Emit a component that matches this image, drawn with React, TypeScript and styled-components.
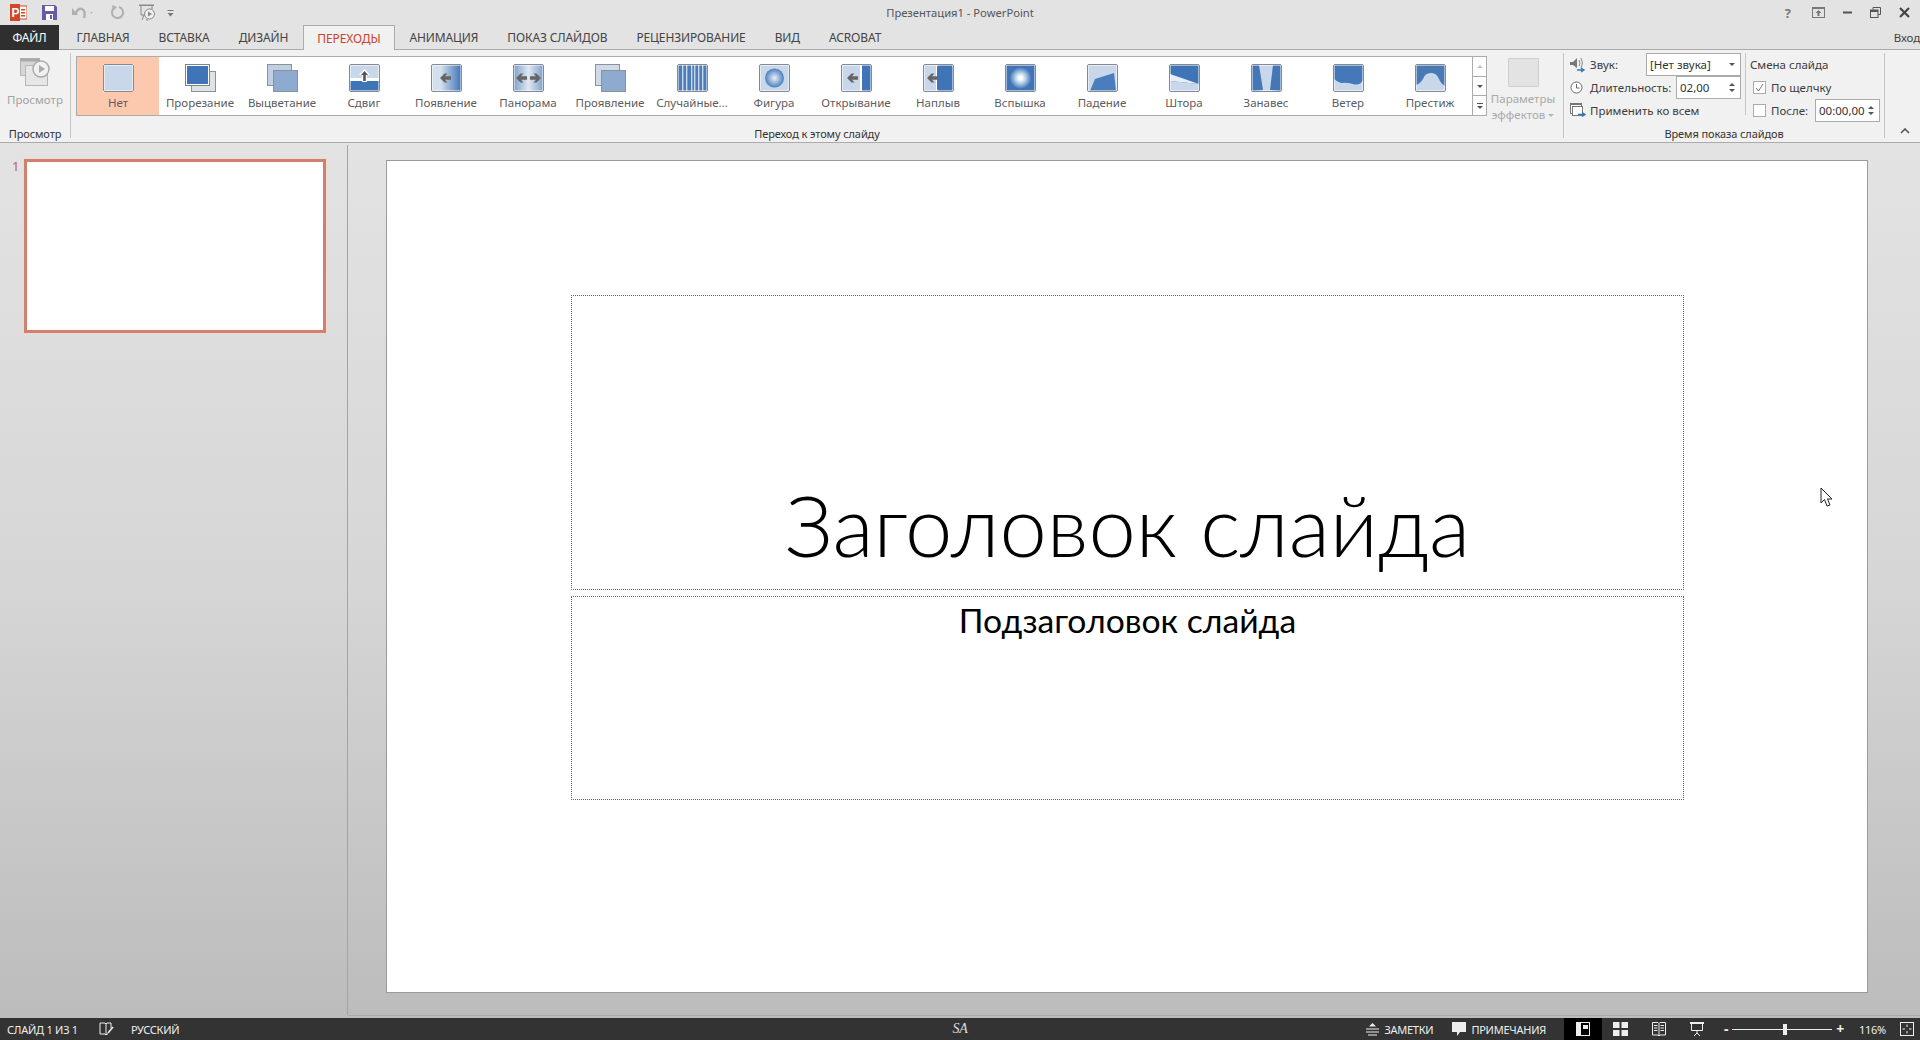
import React from "react";
import styled, { createGlobalStyle } from "styled-components";

const GlobalStyle = createGlobalStyle`
  html, body {
    margin: 0;
    padding: 0;
    background: #e3e3e3;
  }
  * {
    box-sizing: border-box;
  }
`;

const Window = styled.div`
  width: 1920px;
  height: 1040px;
  overflow: hidden;
  display: grid;
  grid-template-rows: 25px 25px 93px 875px 22px;
  font-family: "Noto Sans", "Liberation Sans", sans-serif;
  font-size: 12px;
  color: #444;
`;

/* title bar */
const TitleBar = styled.div`
  display: grid;
  grid-template-columns: 1fr auto 1fr;
  align-items: center;
  background: #e3e3e3;
`;

const QuickAccess = styled.div`
  display: flex;
  align-items: center;
  padding-left: 10px;
  gap: 14px;
`;

const DocTitle = styled.div`
  font-size: 11.2px;
  color: #555;
`;

const WindowButtons = styled.div`
  display: flex;
  justify-content: flex-end;
  align-items: center;
  gap: 18px;
  padding-right: 10px;
`;

const Help = styled.span`
  font-weight: 700;
  font-size: 13px;
  color: #777;
  margin-right: 3px;
`;

/* tabs */
const TabRow = styled.div`
  display: flex;
  align-items: stretch;
  background: #e3e3e3;
  border-bottom: 1px solid #ababab;
  letter-spacing: -0.12px;
`;

const FileTab = styled.div`
  width: 59px;
  background: #2f2f2f;
  color: #fff;
  display: flex;
  align-items: center;
  justify-content: center;
  font-size: 12px;
  margin-bottom: -1px;
  margin-right: 3px;
`;

const Tab = styled.div<{ $active?: boolean }>`
  padding: 0 13.5px;
  display: flex;
  align-items: center;
  font-size: 12px;
  white-space: nowrap;
  color: ${(p) => (p.$active ? "#c8452b" : "#444")};
  background: ${(p) => (p.$active ? "#f1f1f1" : "transparent")};
  border: 1px solid ${(p) => (p.$active ? "#ababab" : "transparent")};
  border-bottom: 0;
  margin-bottom: ${(p) => (p.$active ? "-1px" : "0")};
`;

const SignIn = styled.div`
  margin-left: auto;
  display: flex;
  align-items: center;
  font-size: 11.5px;
  color: #444;
`;

/* ribbon */
const Ribbon = styled.div`
  display: flex;
  background: #f1f1f1;
  border-bottom: 1px solid #ababab;
  padding-top: 3px;
`;

const Group = styled.div<{ $width: number }>`
  width: ${(p) => p.$width}px;
  height: 85px;
  border-right: 1px solid #c6c6c6;
  display: flex;
  flex-direction: column;
`;

const GroupBody = styled.div`
  height: 74px;
  display: flex;
`;

const GroupLabel = styled.div`
  height: 11px;
  line-height: 14px;
  font-size: 11px;
  letter-spacing: -0.1px;
  color: #333;
  text-align: center;
  white-space: nowrap;
`;

const PreviewButton = styled.div`
  width: 100%;
  display: flex;
  flex-direction: column;
  align-items: center;
  padding-top: 4px;
  color: #a2a2a2;
  font-size: 11.5px;
  gap: 5px;
`;

const TransitionsBody = styled(GroupBody)`
  padding: 3px 0 0 5px;
`;

const Gallery = styled.div`
  height: 60px;
  width: 1411px;
  display: flex;
  background: #fff;
  border: 1px solid #ababab;
`;

const GalleryItems = styled.div`
  flex: 1;
  display: flex;
`;

const GalleryItem = styled.div<{ $selected?: boolean }>`
  width: 82px;
  display: flex;
  flex-direction: column;
  align-items: center;
  padding-top: 7px;
  background: ${(p) => (p.$selected ? "#fcc9ae" : "transparent")};
  color: #5c5c5c;
  font-size: 11.5px;
  white-space: nowrap;
`;

const ItemLabel = styled.span`
  line-height: 16px;
  margin-top: 3px;
`;

const GalleryScroll = styled.div`
  width: 14px;
  display: flex;
  flex-direction: column;
  border-left: 1px solid #ababab;
`;

const ScrollButton = styled.div`
  flex: 1;
  display: flex;
  flex-direction: column;
  gap: 2px;
  align-items: center;
  justify-content: center;
  & + & {
    border-top: 1px solid #ababab;
  }
`;

const Triangle = styled.span<{ $dir?: "up" | "down"; $color?: string }>`
  width: 0;
  height: 0;
  border-left: 3px solid transparent;
  border-right: 3px solid transparent;
  ${(p) =>
    p.$dir === "up"
      ? `border-bottom: 3px solid ${p.$color || "#555"};`
      : `border-top: 3px solid ${p.$color || "#555"};`}
`;

const ScrollLine = styled.span`
  width: 6px;
  height: 1px;
  background: #555;
`;

const EffectButton = styled.div`
  width: 72px;
  display: flex;
  flex-direction: column;
  align-items: center;
  padding-top: 2px;
  color: #a9a9a9;
  font-size: 11.5px;
  line-height: 16px;
  text-align: center;
`;

const EffectBox = styled.div`
  width: 31px;
  height: 29px;
  background: #e3e3e3;
  border: 1px solid #cfcfcf;
  border-radius: 1px;
  margin-bottom: 4px;
`;

const EffectLine = styled.span`
  display: flex;
  align-items: center;
  gap: 3px;
`;

const TimingBody = styled(GroupBody)`
  padding-left: 6px;
`;

const TimingColumn = styled.div`
  width: 171px;
  display: flex;
  flex-direction: column;
`;

const TimingSide = styled.div`
  margin-left: 4px;
  padding-left: 4px;
  border-left: 1px solid #c6c6c6;
  height: 62px;
  width: 135px;
  display: flex;
  flex-direction: column;
`;

const TimingRow = styled.div`
  height: 23px;
  flex-shrink: 0;
  display: flex;
  align-items: center;
  color: #3c3c3c;
  font-size: 11.5px;
  white-space: nowrap;
`;

const RowIcon = styled.span`
  width: 20px;
  display: flex;
  align-items: center;
`;

const Field = styled.div<{ $width: number }>`
  margin-left: auto;
  width: ${(p) => p.$width}px;
  height: 23px;
  background: #fff;
  border: 1px solid #ababab;
  display: flex;
  align-items: center;
  justify-content: space-between;
  padding: 0 5px 0 3px;
  font-size: 11.5px;
  color: #333;
`;

const Spin = styled.span`
  display: flex;
  flex-direction: column;
  gap: 3px;
`;

const CheckBox = styled.span`
  width: 13px;
  height: 13px;
  background: #fff;
  border: 1px solid #ababab;
  margin: 0 5px 0 3px;
  display: flex;
  align-items: center;
  justify-content: center;
`;

const CollapseCell = styled.div`
  flex: 1;
  display: flex;
  align-items: flex-end;
  justify-content: flex-end;
  padding: 0 10px 4px 0;
  height: 85px;
`;

/* work area */
const Workspace = styled.div`
  display: flex;
  background: linear-gradient(#e3e3e3, #d6d6d6 50%, #bcbcbc);
`;

const ThumbPane = styled.div`
  width: 348px;
  margin-top: 2px;
  border-right: 1px solid #a3a3a3;
  display: flex;
  align-items: flex-start;
  padding: 14px 0 0 12px;
  margin-bottom: 3px;
`;

const ThumbNumber = styled.span`
  font-size: 13px;
  color: #c4604a;
  width: 12px;
  line-height: 14px;
`;

const Thumb = styled.div`
  width: 302px;
  height: 174px;
  background: #fff;
  border: 3px solid #d0806f;
  box-shadow: 0 0 0 1px #f3d8cf;
`;

const EditPane = styled.div`
  flex: 1;
  padding: 17px 0 0 38px;
`;

const EditFrame = styled.div`
  height: 857px;
`;

const Slide = styled.div`
  position: relative;
  width: 1482px;
  height: 833px;
  background: #fff;
  border: 1px solid #9a9a9a;
  padding: 134px 0 0 184px;
  display: flex;
  flex-direction: column;
  gap: 6px;
`;

const Placeholder = styled.div<{ $height: number }>`
  width: 1113px;
  height: ${(p) => p.$height}px;
  border: 1px dotted #666;
  display: flex;
  justify-content: center;
  color: #000;
`;

const TitlePlaceholder = styled(Placeholder)`
  align-items: flex-end;
`;

const TitleText = styled.div`
  font-family: "Lato", "Open Sans", sans-serif;
  font-weight: 300;
  font-size: 85px;
  line-height: 100px;
  padding-bottom: 15px;
  white-space: nowrap;
`;

const SubtitleText = styled.div`
  font-family: "Lato", "Open Sans", sans-serif;
  font-size: 33.7px;
  line-height: 40px;
  padding-top: 3px;
  white-space: nowrap;
`;

const Pointer = styled.svg`
  position: absolute;
  left: 1433px;
  top: 326px;
`;

const BottomRule = styled.div`
  height: 1px;
  margin-left: -38px;
  margin-top: 22px;
  background: #a9a9a9;
`;

/* status bar */
const StatusBar = styled.div`
  display: grid;
  grid-template-columns: 1fr auto 1fr;
  align-items: center;
  background: #333;
  color: #eee;
  font-size: 11px;
  letter-spacing: -0.25px;
`;

const StatusLeft = styled.div`
  display: flex;
  align-items: center;
  padding-left: 7px;
  white-space: nowrap;
`;

const StatusRight = styled.div`
  display: flex;
  align-items: center;
  justify-content: flex-end;
  height: 22px;
  white-space: nowrap;
`;

const StatusItem = styled.div<{ $gap?: number }>`
  display: flex;
  align-items: center;
  gap: 5px;
  margin-left: ${(p) => p.$gap || 0}px;
`;

const Signature = styled.span`
  font-family: "Liberation Serif", serif;
  font-style: italic;
  font-size: 14px;
  color: #ddd;
`;

const ViewButton = styled.div<{ $active?: boolean; $gap?: number; $width?: number }>`
  width: ${(p) => p.$width || 38}px;
  height: 22px;
  margin-left: ${(p) => p.$gap || 0}px;
  display: flex;
  align-items: center;
  justify-content: center;
  background: ${(p) => (p.$active ? "#000" : "transparent")};
`;

const ZoomTrack = styled.div`
  width: 100px;
  height: 1px;
  background: #eee;
  margin: 0 4px;
  position: relative;
`;

const ZoomThumb = styled.span`
  position: absolute;
  left: 51px;
  top: -5px;
  width: 4px;
  height: 11px;
  background: #eee;
`;

const ZoomSign = styled.span`
  font-size: 14px;
  font-weight: 700;
  line-height: 14px;
  color: #eee;
`;

const Frame = () => (
  <rect x="0.5" y="0.5" width="30" height="27" rx="1.5" fill="none" stroke="#fff" strokeWidth="2" />
);

const Border = () => (
  <rect x="0.5" y="0.5" width="30" height="27" rx="1.5" fill="none" stroke="#858a90" />
);

const Arrow = ({ x, y, flip }: { x: number; y: number; flip?: boolean }) => (
  <path
    transform={`translate(${x} ${y})${flip ? " scale(-1 1)" : ""}`}
    d="M0 0 L4.5 -4.5 H7.5 L5 -1.8 H11 V1.8 H5 L7.5 4.5 H4.5 Z"
    fill="#666"
  />
);

const blue = "#3f74b6";
const light = "#c8d8ea";

const TransitionIcon = ({ kind }: { kind: string }) => {
  let art: React.ReactNode = null;
  switch (kind) {
    case "none":
      art = <rect x="1" y="1" width="29" height="26" fill={light} />;
      break;
    case "cut":
      return (
        <svg width="31" height="28" viewBox="0 0 31 28">
          <rect x="6.5" y="7.5" width="24" height="20" fill="#dfe3e8" stroke="#8d9196" />
          <rect x="0.5" y="0.5" width="24" height="21" fill={blue} stroke="#fff" />
          <rect x="0.5" y="0.5" width="24" height="21" fill="none" stroke="#7d8389" />
          <rect x="1.5" y="1.5" width="22" height="19" fill="none" stroke="#fff" />
        </svg>
      );
    case "fade":
    case "reveal":
      return (
        <svg width="31" height="28" viewBox="0 0 31 28">
          <rect x="0.5" y="0.5" width="24" height="21" fill={kind === "fade" ? "#c0cfe2" : "#cfdbe9"} stroke="#8d9196" />
          <rect x="6.5" y="6.5" width="24" height="21" fill="#8faacf" stroke="#8d9196" />
        </svg>
      );
    case "push":
      art = (
        <>
          <rect x="1" y="1" width="29" height="13" fill={light} />
          <rect x="1" y="14" width="29" height="3" fill="#fff" />
          <rect x="1" y="17" width="29" height="10" fill={blue} />
          <path d="M15.5 5 L21 11 H17.8 V18 H13.2 V11 H10 Z" fill="#fff" />
          <path d="M15.5 7 L19 11 H16.8 V17 H14.2 V11 H12 Z" fill="#555" />
        </>
      );
      break;
    case "appear":
      art = (
        <>
          <defs>
            <linearGradient id="g-appear" x1="0" x2="1" y1="0" y2="0">
              <stop offset="0.3" stopColor="#d4e0ee" />
              <stop offset="1" stopColor="#3f74b6" />
            </linearGradient>
          </defs>
          <rect x="1" y="1" width="29" height="26" fill="url(#g-appear)" />
          <Arrow x={9} y={14} />
        </>
      );
      break;
    case "pan":
      art = (
        <>
          <defs>
            <linearGradient id="g-pan" x1="0" x2="1" y1="0" y2="0">
              <stop offset="0" stopColor="#7fa2cc" />
              <stop offset="0.5" stopColor="#dfe8f2" />
              <stop offset="1" stopColor="#7fa2cc" />
            </linearGradient>
          </defs>
          <rect x="1" y="1" width="29" height="26" fill="url(#g-pan)" />
          <Arrow x={3} y={14} />
          <Arrow x={28} y={14} flip />
        </>
      );
      break;
    case "bars":
      art = (
        <>
          <rect x="1" y="1" width="29" height="26" fill="#4c7db9" />
          {[5, 9, 14, 17, 21, 25].map((x) => (
            <rect key={x} x={x} y="1" width="1.4" height="26" fill="#c6d7ea" />
          ))}
        </>
      );
      break;
    case "shape":
      art = (
        <>
          <defs>
            <radialGradient id="g-shape">
              <stop offset="0" stopColor="#eaf1f8" />
              <stop offset="1" stopColor="#4b7fbc" />
            </radialGradient>
          </defs>
          <rect x="1" y="1" width="29" height="26" fill={light} />
          <circle cx="15.5" cy="14" r="9.5" fill="url(#g-shape)" />
        </>
      );
      break;
    case "open":
      art = (
        <>
          <rect x="1" y="1" width="18" height="26" fill={light} />
          <rect x="19" y="1" width="2" height="26" fill="#fff" />
          <rect x="21" y="1" width="9" height="26" fill={blue} />
          <Arrow x={6} y={14} />
        </>
      );
      break;
    case "overlap":
      art = (
        <>
          <rect x="1" y="1" width="12" height="26" fill={light} />
          <rect x="13" y="1" width="16" height="26" rx="2" fill="#fff" />
          <rect x="14" y="1" width="16" height="26" rx="2" fill={blue} />
          <Arrow x={4} y={14} />
        </>
      );
      break;
    case "flash":
      art = (
        <>
          <defs>
            <radialGradient id="g-flash">
              <stop offset="0.15" stopColor="#fff" />
              <stop offset="0.45" stopColor="#bcd5ee" />
              <stop offset="1" stopColor="#3f74b6" />
            </radialGradient>
          </defs>
          <rect x="1" y="1" width="29" height="26" fill="#3f74b6" />
          <circle cx="15.5" cy="14" r="11" fill="url(#g-flash)" />
        </>
      );
      break;
    case "fall":
      art = (
        <>
          <rect x="1" y="1" width="29" height="26" fill={light} />
          <path d="M3 27 L8 15 L27 9 L29 27 Z" fill="#4a7dbb" />
        </>
      );
      break;
    case "blind":
      art = (
        <>
          <rect x="1" y="1" width="29" height="26" fill={blue} />
          <path d="M1 10 L30 20 L1 17 Z" fill="#e6edf5" />
          <path d="M1 17 L30 20 V27 H1 Z" fill={light} />
        </>
      );
      break;
    case "drape":
      art = (
        <>
          <rect x="1" y="1" width="29" height="26" fill={light} />
          <path d="M1 1 H8 L12 26 L4 27 H1 Z" fill="#4577b6" />
          <path d="M22 1 H30 V27 H27 L19 26 Z" fill="#4577b6" />
        </>
      );
      break;
    case "wind":
      art = (
        <>
          <rect x="1" y="1" width="29" height="26" fill={light} />
          <path d="M1 1 H30 V16 Q27 22 20 20 T8 19 Q3 17 1 15 Z" fill="#4478b8" />
        </>
      );
      break;
    case "prestige":
      art = (
        <>
          <rect x="1" y="1" width="29" height="26" fill={light} />
          <path d="M1 1 H30 V22 Q26 20 24 15 Q21 8 15.5 9 Q10 9 8 15 Q5 20 1 21 Z" fill="#4a7ab6" />
        </>
      );
      break;
  }
  return (
    <svg width="31" height="28" viewBox="0 0 31 28">
      {art}
      <Frame />
      <Border />
    </svg>
  );
};

const transitions: [string, string][] = [
  ["none", "Нет"],
  ["cut", "Прорезание"],
  ["fade", "Выцветание"],
  ["push", "Сдвиг"],
  ["appear", "Появление"],
  ["pan", "Панорама"],
  ["reveal", "Проявление"],
  ["bars", "Случайные..."],
  ["shape", "Фигура"],
  ["open", "Открывание"],
  ["overlap", "Наплыв"],
  ["flash", "Вспышка"],
  ["fall", "Падение"],
  ["blind", "Штора"],
  ["drape", "Занавес"],
  ["wind", "Ветер"],
  ["prestige", "Престиж"],
];

const QuickIcons = () => (
  <>
    <svg width="17" height="17" viewBox="0 0 17 17">
      <rect x="6" y="2" width="11" height="13" fill="#fff" stroke="#d24726" />
      <rect x="11" y="5" width="4" height="1.5" fill="#d24726" />
      <rect x="11" y="8" width="4" height="1.5" fill="#d24726" />
      <rect x="11" y="11" width="4" height="1.5" fill="#d24726" />
      <rect x="0" y="0" width="10" height="17" fill="#d24726" />
      <text x="1.5" y="13" fontSize="12" fontWeight="700" fill="#fff" fontFamily="Liberation Sans">P</text>
    </svg>
    <svg width="15" height="15" viewBox="0 0 15 15" style={{ marginLeft: 1 }}>
      <path d="M0 0 H13 L15 2 V15 H0 Z" fill="#6a5aa6" />
      <rect x="3" y="1" width="9" height="5" fill="#fff" />
      <rect x="4" y="9" width="7" height="6" fill="#fff" />
      <rect x="8" y="10" width="2" height="4" fill="#6a5aa6" />
    </svg>
    <svg width="22" height="15" viewBox="0 0 22 15">
      <path d="M5 8 Q7 3 11 4 Q15 6 13 13" fill="none" stroke="#b0b0b0" strokeWidth="2.4" />
      <path d="M1 3 L7 10 L1 10 Z" fill="#b0b0b0" />
      <path d="M19 7 h3 l-1.5 2 z" fill="#b9b9b9" />
    </svg>
    <svg width="15" height="15" viewBox="0 0 15 15" style={{ marginLeft: 3 }}>
      <path d="M9 2 A5.6 5.6 0 1 1 3.5 3.5" fill="none" stroke="#b0b0b0" strokeWidth="2" />
      <path d="M2 0 L7 2 L3 6 Z" fill="#b0b0b0" />
    </svg>
    <svg width="17" height="17" viewBox="0 0 17 17">
      <rect x="0" y="0.5" width="15" height="1.5" fill="#8a8a8a" />
      <path d="M2 2 V11 H7 M13 2 V5" fill="none" stroke="#8a8a8a" />
      <circle cx="10.5" cy="10" r="5" fill="#eee" stroke="#8a8a8a" />
      <path d="M9 7.5 L13 10 L9 12.5 Z" fill="#8a8a8a" />
      <path d="M5 11 L3 16 M8 15 V17" stroke="#8a8a8a" />
    </svg>
    <svg width="7" height="8" viewBox="0 0 7 8" style={{ marginLeft: -3 }}>
      <rect x="0.5" y="1" width="6" height="1" fill="#777" />
      <path d="M0.5 4 h6 l-3 3.4 z" fill="#777" />
    </svg>
  </>
);

const WindowIcons = () => (
  <>
    <Help>?</Help>
    <svg width="13" height="11" viewBox="0 0 13 11">
      <rect x="0.5" y="0.5" width="12" height="10" fill="none" stroke="#777" />
      <rect x="0" y="0" width="13" height="2" fill="#777" />
      <path d="M6.5 3 L9.5 6 H7.5 V9 H5.5 V6 H3.5 Z" fill="#777" />
    </svg>
    <svg width="9" height="3" viewBox="0 0 9 3">
      <rect width="9" height="2" y="0.5" fill="#555" />
    </svg>
    <svg width="11" height="11" viewBox="0 0 11 11">
      <path d="M3 2.5 V0.5 H10.5 V7.5 H8" fill="none" stroke="#555" />
      <rect x="0.5" y="3" width="7.5" height="7.5" fill="#e3e3e3" stroke="#555" />
      <rect x="0" y="3" width="8" height="2" fill="#555" />
    </svg>
    <svg width="11" height="11" viewBox="0 0 11 11">
      <path d="M1 1 L10 10 M10 1 L1 10" stroke="#444" strokeWidth="2.2" />
    </svg>
  </>
);

export default function App() {
  return (
    <Window>
      <GlobalStyle />
      <TitleBar>
        <QuickAccess>
          <QuickIcons />
        </QuickAccess>
        <DocTitle>Презентация1 - PowerPoint</DocTitle>
        <WindowButtons>
          <WindowIcons />
        </WindowButtons>
      </TitleBar>

      <TabRow>
        <FileTab>ФАЙЛ</FileTab>
        <Tab>ГЛАВНАЯ</Tab>
        <Tab>ВСТАВКА</Tab>
        <Tab>ДИЗАЙН</Tab>
        <Tab $active>ПЕРЕХОДЫ</Tab>
        <Tab>АНИМАЦИЯ</Tab>
        <Tab>ПОКАЗ СЛАЙДОВ</Tab>
        <Tab>РЕЦЕНЗИРОВАНИЕ</Tab>
        <Tab>ВИД</Tab>
        <Tab>ACROBAT</Tab>
        <SignIn>Вход</SignIn>
      </TabRow>

      <Ribbon>
        <Group $width={71}>
          <GroupBody>
            <PreviewButton>
              <svg width="32" height="30" viewBox="0 0 32 30">
                <rect x="1.5" y="1.5" width="19" height="17" fill="#d6d6d6" stroke="#b5b5b5" />
                <rect x="1.5" y="1.5" width="19" height="3" fill="#a9a9a9" />
                <rect x="6.5" y="8.5" width="22" height="20" fill="#e6e6e6" stroke="#b5b5b5" />
                <circle cx="22" cy="12" r="8" fill="#f1f1f1" stroke="#aaa" strokeWidth="1.5" />
                <path d="M20 8 L26 12 L20 16 Z" fill="#aaa" />
              </svg>
              Просмотр
            </PreviewButton>
          </GroupBody>
          <GroupLabel>Просмотр</GroupLabel>
        </Group>

        <Group $width={1493}>
          <TransitionsBody>
            <Gallery>
              <GalleryItems>
                {transitions.map(([kind, label]) => (
                  <GalleryItem key={kind} $selected={kind === "none"}>
                    <TransitionIcon kind={kind} />
                    <ItemLabel>{label}</ItemLabel>
                  </GalleryItem>
                ))}
              </GalleryItems>
              <GalleryScroll>
                <ScrollButton>
                  <Triangle $dir="up" $color="#c4c4c4" />
                </ScrollButton>
                <ScrollButton>
                  <Triangle />
                </ScrollButton>
                <ScrollButton>
                  <ScrollLine />
                  <Triangle />
                </ScrollButton>
              </GalleryScroll>
            </Gallery>
            <EffectButton>
              <EffectBox />
              Параметры
              <EffectLine>
                эффектов
                <Triangle $color="#b5b5b5" />
              </EffectLine>
            </EffectButton>
          </TransitionsBody>
          <GroupLabel>Переход к этому слайду</GroupLabel>
        </Group>

        <Group $width={321}>
          <TimingBody>
            <TimingColumn>
              <TimingRow>
                <RowIcon>
                  <svg width="16" height="16" viewBox="0 0 16 16">
                    <path d="M0 5 H3 L7 1 V11 L3 8 H0 Z" fill="#777" />
                    <path d="M9 3 Q11 6 9 9 M11 1 Q14 6 11 11" fill="none" stroke="#888" />
                    <path d="M7 13 H13 M11 11 L14 13 L11 15" fill="none" stroke="#3f74b6" strokeWidth="1.4" />
                  </svg>
                </RowIcon>
                Звук:
                <Field $width={95}>
                  [Нет звука]
                  <Triangle />
                </Field>
              </TimingRow>
              <TimingRow>
                <RowIcon>
                  <svg width="13" height="13" viewBox="0 0 13 13">
                    <circle cx="6.5" cy="6.5" r="5.5" fill="#fff" stroke="#666" />
                    <path d="M6.5 3 V7 H9.5" fill="none" stroke="#666" />
                  </svg>
                </RowIcon>
                Длительность:
                <Field $width={65}>
                  02,00
                  <Spin>
                    <Triangle $dir="up" />
                    <Triangle />
                  </Spin>
                </Field>
              </TimingRow>
              <TimingRow>
                <RowIcon>
                  <svg width="16" height="15" viewBox="0 0 16 15">
                    <rect x="0.5" y="0.5" width="11" height="10" fill="#fff" stroke="#777" />
                    <rect x="0" y="0" width="12" height="2" fill="#777" />
                    <rect x="2.5" y="3.5" width="10" height="9" fill="#fff" stroke="#777" />
                    <path d="M8 11.5 H14 M12 9.5 L15 11.5 L12 13.5" fill="none" stroke="#3f74b6" strokeWidth="1.4" />
                  </svg>
                </RowIcon>
                Применить ко всем
              </TimingRow>
            </TimingColumn>
            <TimingSide>
              <TimingRow>Смена слайда</TimingRow>
              <TimingRow>
                <CheckBox>
                  <svg width="9" height="9" viewBox="0 0 9 9">
                    <path d="M1 5 L3.5 8 L8 1" fill="none" stroke="#777" />
                  </svg>
                </CheckBox>
                По щелчку
              </TimingRow>
              <TimingRow>
                <CheckBox />
                После:
                <Field $width={65}>
                  00:00,00
                  <Spin>
                    <Triangle $dir="up" />
                    <Triangle />
                  </Spin>
                </Field>
              </TimingRow>
            </TimingSide>
          </TimingBody>
          <GroupLabel>Время показа слайдов</GroupLabel>
        </Group>

        <CollapseCell>
          <svg width="10" height="6" viewBox="0 0 10 6">
            <path d="M1 5 L5 1 L9 5" fill="none" stroke="#555" strokeWidth="1.6" />
          </svg>
        </CollapseCell>
      </Ribbon>

      <Workspace>
        <ThumbPane>
          <ThumbNumber>1</ThumbNumber>
          <Thumb />
        </ThumbPane>
        <EditPane>
          <EditFrame>
            <Slide>
              <TitlePlaceholder $height={295}>
                <TitleText>Заголовок слайда</TitleText>
              </TitlePlaceholder>
              <Placeholder $height={204}>
                <SubtitleText>Подзаголовок слайда</SubtitleText>
              </Placeholder>
              <Pointer width="14" height="21" viewBox="0 0 14 21">
                <path d="M1 1 V16 L4.5 12.5 L7 19 L10 18 L7.5 12 H12 Z" fill="#fff" stroke="#222" />
              </Pointer>
            </Slide>
            <BottomRule />
          </EditFrame>
        </EditPane>
      </Workspace>

      <StatusBar>
        <StatusLeft>
          <span>СЛАЙД 1 ИЗ 1</span>
          <StatusItem $gap={21}>
            <svg width="15" height="15" viewBox="0 0 15 15">
              <path d="M1 1 H6 L7 2 V13 L6 12 H1 Z M7 2 L8 1 H12 V6 M7 13 L8 12 H9" fill="none" stroke="#eee" />
              <path d="M9 11 L14 5" stroke="#eee" strokeWidth="1.6" />
            </svg>
          </StatusItem>
          <StatusItem $gap={17}>РУССКИЙ</StatusItem>
        </StatusLeft>
        <Signature>SA</Signature>
        <StatusRight>
          <StatusItem>
            <svg width="13" height="13" viewBox="0 0 13 13">
              <path d="M6.5 0 L10 3.5 H3 Z" fill="#eee" />
              <path d="M0 6 H13 M0 9 H13 M2 12 H11" stroke="#eee" />
            </svg>
            ЗАМЕТКИ
          </StatusItem>
          <StatusItem $gap={19}>
            <svg width="14" height="14" viewBox="0 0 14 14">
              <path d="M0 0 H14 V10 H8 L5 14 V10 H0 Z" fill="#eee" />
            </svg>
            ПРИМЕЧАНИЯ
          </StatusItem>
          <ViewButton $active $gap={18}>
            <svg width="14" height="14" viewBox="0 0 14 14">
              <rect x="0.5" y="0.5" width="13" height="13" fill="none" stroke="#eee" />
              <rect x="0" y="0" width="5" height="14" fill="#eee" />
              <rect x="7" y="3" width="5" height="4" fill="#eee" />
            </svg>
          </ViewButton>
          <ViewButton>
            <svg width="15" height="14" viewBox="0 0 15 14">
              <path d="M0 0 H6.5 V6 H0 Z M8.5 0 H15 V6 H8.5 Z M0 8 H6.5 V14 H0 Z M8.5 8 H15 V14 H8.5 Z" fill="#eee" />
            </svg>
          </ViewButton>
          <ViewButton>
            <svg width="14" height="14" viewBox="0 0 14 14">
              <path d="M0.5 0.5 H6 L7 1.5 L8 0.5 H13.5 V13 H8 L7 14 L6 13 H0.5 Z M7 1.5 V14" fill="none" stroke="#eee" />
              <path d="M2 3.5 H5.5 M2 6 H5.5 M2 8.5 H5.5 M8.5 3.5 H12 M8.5 6 H12 M8.5 8.5 H12" stroke="#eee" />
            </svg>
          </ViewButton>
          <ViewButton>
            <svg width="14" height="14" viewBox="0 0 14 14">
              <rect x="0" y="0" width="14" height="2" fill="#eee" />
              <path d="M1.5 2 V8.5 H12.5 V2 M7 8.5 V11 M4 14 L7 11 L10 14" fill="none" stroke="#eee" />
            </svg>
          </ViewButton>
          <StatusItem $gap={8}>
            <ZoomSign>-</ZoomSign>
          </StatusItem>
          <ZoomTrack>
            <ZoomThumb />
          </ZoomTrack>
          <ZoomSign>+</ZoomSign>
          <StatusItem $gap={15}>116%</StatusItem>
          <ViewButton $gap={7} $width={27}>
            <svg width="14" height="14" viewBox="0 0 14 14">
              <rect x="0.5" y="0.5" width="13" height="13" fill="none" stroke="#eee" />
              <path d="M7 2.5 V5 M7 9 V11.5 M2.5 7 H5 M9 7 H11.5" stroke="#eee" />
            </svg>
          </ViewButton>
        </StatusRight>
      </StatusBar>
    </Window>
  );
}
